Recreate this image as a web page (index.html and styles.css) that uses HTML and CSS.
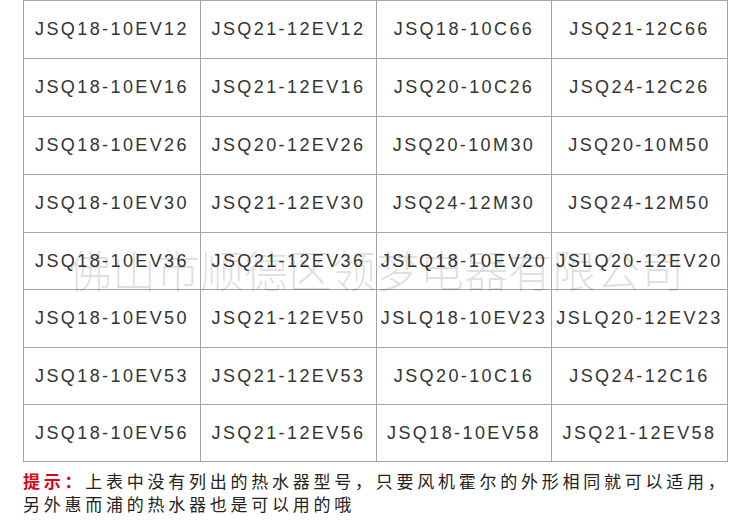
FILE: index.html
```html
<!DOCTYPE html>
<html lang="zh-CN">
<head>
<meta charset="utf-8">
<title>型号表</title>
<link rel="stylesheet" href="styles.css">
</head>
<body>
<div class="page">
  <div class="sheet">
    <div class="grid">
      <div class="cell">JSQ18-10EV12</div>
      <div class="cell">JSQ21-12EV12</div>
      <div class="cell">JSQ18-10C66</div>
      <div class="cell">JSQ21-12C66</div>
      <div class="cell">JSQ18-10EV16</div>
      <div class="cell">JSQ21-12EV16</div>
      <div class="cell">JSQ20-10C26</div>
      <div class="cell">JSQ24-12C26</div>
      <div class="cell">JSQ18-10EV26</div>
      <div class="cell">JSQ20-12EV26</div>
      <div class="cell">JSQ20-10M30</div>
      <div class="cell">JSQ20-10M50</div>
      <div class="cell">JSQ18-10EV30</div>
      <div class="cell">JSQ21-12EV30</div>
      <div class="cell">JSQ24-12M30</div>
      <div class="cell">JSQ24-12M50</div>
      <div class="cell">JSQ18-10EV36</div>
      <div class="cell">JSQ21-12EV36</div>
      <div class="cell">JSLQ18-10EV20</div>
      <div class="cell">JSLQ20-12EV20</div>
      <div class="cell">JSQ18-10EV50</div>
      <div class="cell">JSQ21-12EV50</div>
      <div class="cell">JSLQ18-10EV23</div>
      <div class="cell">JSLQ20-12EV23</div>
      <div class="cell">JSQ18-10EV53</div>
      <div class="cell">JSQ21-12EV53</div>
      <div class="cell">JSQ20-10C16</div>
      <div class="cell">JSQ24-12C16</div>
      <div class="cell">JSQ18-10EV56</div>
      <div class="cell">JSQ21-12EV56</div>
      <div class="cell">JSQ18-10EV58</div>
      <div class="cell">JSQ21-12EV58</div>
    </div>
    <div class="watermark">佛山市顺德区领梦电器有限公司</div>
  </div>
  <p class="note"><span class="note-label">提示：</span>上表中没有列出的热水器型号，只要风机霍尔的外形相同就可以适用，<br>另外惠而浦的热水器也是可以用的哦</p>
</div>
</body>
</html>
```
FILE: styles.css
```css
html, body {
  margin: 0;
  padding: 0;
  background: #ffffff;
}

.page {
  padding: 0 0 0 23px;
}

.sheet {
  position: relative;
  width: 705px;
}

.grid {
  display: grid;
  grid-template-columns: 176px 175px 174px 175px;
  grid-template-rows: 57px 57px 57px 57px 56px 57px 56px 56px;
  gap: 1px;
  padding: 1px;
  background: #a3a3a3;
}

.cell {
  background: #ffffff;
  display: flex;
  align-items: center;
  justify-content: center;
  font-family: "Liberation Sans", Arial, sans-serif;
  font-size: 18px;
  letter-spacing: 2.4px;
  color: #333333;
  white-space: nowrap;
}

.watermark {
  position: absolute;
  left: 45px;
  top: 244px;
  font-family: "Noto Sans CJK SC", sans-serif;
  font-weight: 300;
  font-size: 44px;
  line-height: 50px;
  color: rgba(0, 0, 0, 0.13);
  white-space: nowrap;
  pointer-events: none;
}

.note {
  margin: 7px 0 0 0;
  font-family: "Noto Sans CJK SC", sans-serif;
  font-size: 17px;
  line-height: 23px;
  letter-spacing: 3.75px;
  color: #222222;
  white-space: nowrap;
}

.note-label {
  color: #e60012;
  font-weight: 700;
}
```
